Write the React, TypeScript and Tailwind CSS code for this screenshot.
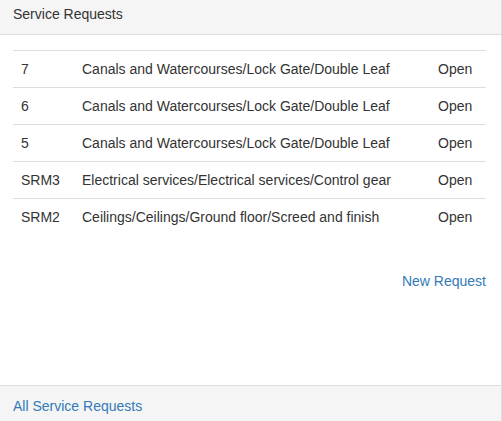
import React from 'react';

const requests = [
  { id: '7', desc: 'Canals and Watercourses/Lock Gate/Double Leaf', status: 'Open' },
  { id: '6', desc: 'Canals and Watercourses/Lock Gate/Double Leaf', status: 'Open' },
  { id: '5', desc: 'Canals and Watercourses/Lock Gate/Double Leaf', status: 'Open' },
  { id: 'SRM3', desc: 'Electrical services/Electrical services/Control gear', status: 'Open' },
  { id: 'SRM2', desc: 'Ceilings/Ceilings/Ground floor/Screed and finish', status: 'Open' },
];

export default function App() {
  return (
    <div
      className="w-[502px] h-[421px] overflow-hidden bg-white text-[14px] leading-[20px] text-[#333]"
      style={{ fontFamily: '"Liberation Sans", Arial, sans-serif' }}
    >
      <div className="flex flex-col h-full border-r border-[#ddd]">
        {/* heading */}
        <div className="h-[35px] pt-[4px] pl-[13px] bg-[#f5f5f5] border-b border-[#ddd]">
          Service Requests
        </div>

        {/* body */}
        <div className="h-[350px] pt-[15px] pl-[13px] pr-[15px]">
          <table className="w-full border-collapse">
            <tbody>
              {requests.map((r) => (
                <tr key={r.id} className="h-[37px]">
                  <td className="w-[61px] px-[8px] py-[8px] border-t border-[#ddd] align-top">{r.id}</td>
                  <td className="px-[8px] py-[8px] border-t border-[#ddd] align-top">{r.desc}</td>
                  <td className="w-[56px] px-[8px] py-[8px] border-t border-[#ddd] align-top">{r.status}</td>
                </tr>
              ))}
            </tbody>
          </table>
          <div className="mt-[35px] text-right">
            <a href="#" className="text-[#337ab7] no-underline">New Request</a>
          </div>
        </div>

        {/* footer */}
        <div className="flex-1 pt-[10px] pl-[13px] bg-[#f5f5f5] border-t border-[#ddd]">
          <a href="#" className="text-[#337ab7] no-underline">All Service Requests</a>
        </div>
      </div>
    </div>
  );
}
